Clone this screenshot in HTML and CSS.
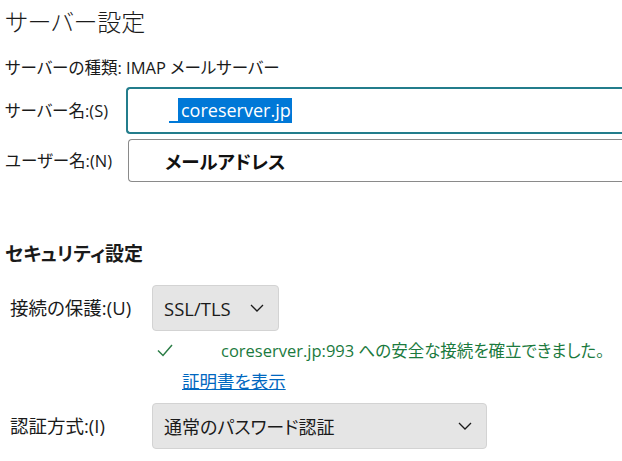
FILE: index.html
```html
<!DOCTYPE html>
<html lang="ja">
<head>
    <meta charset="UTF-8">
    <meta name="viewport" content="width=device-width, initial-scale=1.0">
    <title>サーバー設定</title>
    <link rel="stylesheet" href="styles.css">
</head>
<body>
    <div class="page">
        <h1 class="page__title">サーバー設定</h1>
        <p class="server-type">サーバーの種類: IMAP メールサーバー</p>

        <div class="field-row">
            <span class="field-label">サーバー名:(S)</span>
            <div class="text-box text-box--focused">
                <span class="text-box__gap"></span><span class="text-box__selected">coreserver.jp</span>
            </div>
        </div>
        <div class="field-row field-row--user">
            <span class="field-label">ユーザー名:(N)</span>
            <div class="text-box">
                <span class="text-box__value">メールアドレス</span>
            </div>
        </div>

        <h2 class="section-title">セキュリティ設定</h2>

        <div class="option-row">
            <span class="option-label">接続の保護:(U)</span>
            <div class="select select--small">
                <span>SSL/TLS</span>
                <svg class="select__chevron" width="14" height="8" viewBox="0 0 14 8"><path d="M1 1l6 6 6-6" fill="none" stroke="#1a1a1a" stroke-width="1.3"/></svg>
            </div>
        </div>
        <div class="status">
            <svg class="status__icon" width="16" height="13" viewBox="0 0 16 13"><path d="M1 6.5l5 5L15 1" fill="none" stroke="#2b7d46" stroke-width="1.5"/></svg>
            <span class="status__text">coreserver.jp:993 への安全な接続を確立できました。</span>
        </div>
        <a class="cert-link" href="#">証明書を表示</a>

        <div class="option-row option-row--auth">
            <span class="option-label">認証方式:(I)</span>
            <div class="select select--wide">
                <span>通常のパスワード認証</span>
                <svg class="select__chevron" width="14" height="8" viewBox="0 0 14 8"><path d="M1 1l6 6 6-6" fill="none" stroke="#1a1a1a" stroke-width="1.3"/></svg>
            </div>
        </div>
    </div>
</body>
</html>
```

FILE: styles.css
```css
html, body{
    margin: 0;
    height: 100%;
    overflow: hidden;
    background-color: #ffffff;
}
body{
    font-family: "Open Sans", "Noto Sans CJK JP", sans-serif;
    font-feature-settings: "palt";
    color: #1a1a1a;
}
.page{
    padding: 4px 0 0 5px;
}
.page__title{
    margin: 0;
    font-size: 24px;
    line-height: 36px;
    font-weight: 300;
    color: #1b1b1b;
}
.server-type{
    margin: 16px 0 0 0;
    font-size: 16.5px;
    line-height: 24px;
}
.field-row{
    display: flex;
    align-items: center;
    margin-top: 7px;
}
.field-row--user{
    margin-top: 5px;
}
.field-label{
    flex: none;
    width: 123px;
    font-size: 16.5px;
    line-height: 24px;
}
.text-box{
    flex: 1;
    display: flex;
    align-items: center;
    height: 43px;
    box-sizing: border-box;
    border: 1px solid #8a8a8a;
    border-right: none;
    border-radius: 4px 0 0 4px;
    font-size: 18px;
}
.text-box--focused{
    border: 2px solid #237d8c;
    border-right: none;
    height: 47px;
    margin-left: -2px;
    padding-left: 41px;
}
.text-box__gap{
    display: inline-block;
    width: 9px;
    height: 24px;
    border-bottom: 2px solid #0078d7;
    box-sizing: border-box;
}
.text-box__selected{
    display: inline-block;
    background-color: #0078d7;
    color: #ffffff;
    line-height: 25px;
    padding: 0 1px 0 3px;
}
.text-box__value{
    margin-left: 36px;
    font-size: 18.5px;
    font-weight: 600;
    color: #111111;
}
.section-title{
    margin: 58px 0 0 0;
    font-size: 19px;
    line-height: 28px;
    font-weight: 700;
}
.option-row{
    display: flex;
    align-items: center;
    margin-top: 17px;
    padding-left: 5px;
}
.option-row--auth{
    margin-top: 10px;
}
.option-label{
    flex: none;
    width: 142px;
    font-size: 18.5px;
    line-height: 24px;
}
.select{
    flex: none;
    display: flex;
    align-items: center;
    justify-content: space-between;
    height: 46px;
    box-sizing: border-box;
    padding: 0 14px 0 11px;
    background-color: #e5e5e5;
    border: 1px solid #d3d3d3;
    border-radius: 4px;
    font-size: 18.5px;
}
.select--small{
    width: 127px;
}
.select--wide{
    width: 335px;
    font-size: 18px;
}
.status{
    display: flex;
    align-items: center;
    margin: 7px 0 0 152px;
    height: 24px;
}
.status__icon{
    margin-right: 48px;
}
.status__text{
    font-size: 16.5px;
    color: #1b7a3e;
}
.cert-link{
    display: inline-block;
    margin: 7px 0 0 177px;
    font-size: 17.5px;
    line-height: 24px;
    color: #0067c0;
}
```
